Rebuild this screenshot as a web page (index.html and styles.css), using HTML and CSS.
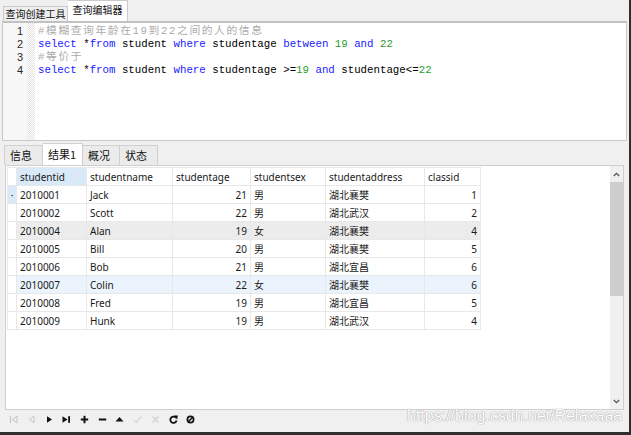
FILE: index.html
```html
<!DOCTYPE html>
<html>
<head>
<meta charset="utf-8">
<link rel="stylesheet" href="styles.css">
</head>
<body>
<div class="app">
  <div class="top-tabs">
    <div class="ttab">查询创建工具</div>
    <div class="ttab active">查询编辑器</div>
  </div>
  <div class="editor">
    <div class="gutter"><div>1</div><div>2</div><div>3</div><div>4</div></div>
    <div class="fold"></div>
    <div class="code">
      <div class="ln cm">#模糊查询年龄在19到22之间的人的信息</div>
      <div class="ln"><span class="kw">select</span> *<span class="kw">from</span> student <span class="kw">where</span> studentage <span class="kw">between</span> <span class="num">19</span> <span class="kw">and</span> <span class="num">22</span></div>
      <div class="ln cm">#等价于</div>
      <div class="ln"><span class="kw">select</span> *<span class="kw">from</span> student <span class="kw">where</span> studentage &gt;=<span class="num">19</span> <span class="kw">and</span> studentage&lt;=<span class="num">22</span></div>
    </div>
  </div>
  <div class="result">
    <div class="rtabs">
      <div class="rtab w39">信息</div>
      <div class="rtab active w40">结果1</div>
      <div class="rtab w37">概况</div>
      <div class="rtab w38">状态</div>
    </div>
    <div class="grid-frame">
      <div class="grid">
        <table>
          <colgroup>
            <col class="c-ind"><col class="c-id"><col class="c-name"><col class="c-age"><col class="c-sex"><col class="c-addr"><col class="c-cls">
          </colgroup>
          <thead>
            <tr><th class="ind"></th><th class="sel">studentid</th><th>studentname</th><th>studentage</th><th>studentsex</th><th>studentaddress</th><th>classid</th></tr>
          </thead>
          <tbody>
            <tr><td class="ind cur">·</td><td>2010001</td><td>Jack</td><td class="r">21</td><td>男</td><td>湖北襄樊</td><td class="r">1</td></tr>
            <tr><td class="ind"></td><td>2010002</td><td>Scott</td><td class="r">22</td><td>男</td><td>湖北武汉</td><td class="r">2</td></tr>
            <tr class="gray"><td class="ind"></td><td>2010004</td><td>Alan</td><td class="r">19</td><td>女</td><td>湖北襄樊</td><td class="r">4</td></tr>
            <tr><td class="ind"></td><td>2010005</td><td>Bill</td><td class="r">20</td><td>男</td><td>湖北襄樊</td><td class="r">5</td></tr>
            <tr><td class="ind"></td><td>2010006</td><td>Bob</td><td class="r">21</td><td>男</td><td>湖北宜昌</td><td class="r">6</td></tr>
            <tr class="blue"><td class="ind"></td><td>2010007</td><td>Colin</td><td class="r">22</td><td>女</td><td>湖北襄樊</td><td class="r">6</td></tr>
            <tr><td class="ind"></td><td>2010008</td><td>Fred</td><td class="r">19</td><td>男</td><td>湖北宜昌</td><td class="r">5</td></tr>
            <tr><td class="ind"></td><td>2010009</td><td>Hunk</td><td class="r">19</td><td>男</td><td>湖北武汉</td><td class="r">4</td></tr>
          </tbody>
        </table>
      </div>
      <div class="vscroll">
        <div class="sb-btn top"><svg width="7" height="5" viewBox="0 0 7 5"><polyline points="0.8,4 3.5,1.3 6.2,4" fill="none" stroke="#555" stroke-width="1.3"/></svg></div>
        <div class="sb-thumb"></div>
        <div class="sb-track"></div>
        <div class="sb-btn bottom"><svg width="7" height="5" viewBox="0 0 7 5"><polyline points="0.8,1 3.5,3.7 6.2,1" fill="none" stroke="#555" stroke-width="1.3"/></svg></div>
      </div>
    </div>
    <div class="toolbar">
      <div class="tb"><svg width="9" height="9" viewBox="0 0 9 9"><line x1="1.5" y1="1" x2="1.5" y2="8" stroke="#c4c4c4" stroke-width="1"/><polygon points="8,1.2 3.2,4.5 8,7.8" fill="none" stroke="#c4c4c4" stroke-width="1"/></svg></div>
      <div class="tb"><svg width="9" height="9" viewBox="0 0 9 9"><polygon points="7,1.2 2.2,4.5 7,7.8" fill="none" stroke="#c8c8c8" stroke-width="1"/></svg></div>
      <div class="tb"><svg width="9" height="9" viewBox="0 0 9 9"><polygon points="2,1.2 7,4.5 2,7.8" fill="#111"/></svg></div>
      <div class="tb"><svg width="9" height="9" viewBox="0 0 9 9"><polygon points="0.5,1.2 5.5,4.5 0.5,7.8" fill="#111"/><rect x="6.2" y="1.2" width="1.8" height="6.6" fill="#111"/></svg></div>
      <div class="tb"><svg width="9" height="9" viewBox="0 0 9 9"><rect x="0.8" y="3.5" width="7.4" height="2" fill="#111"/><rect x="3.5" y="0.8" width="2" height="7.4" fill="#111"/></svg></div>
      <div class="tb"><svg width="9" height="9" viewBox="0 0 9 9"><rect x="0.8" y="3.5" width="7.4" height="2" fill="#111"/></svg></div>
      <div class="tb"><svg width="9" height="9" viewBox="0 0 9 9"><polygon points="0.5,6.5 4.5,2 8.5,6.5" fill="#111"/></svg></div>
      <div class="tb"><svg width="9" height="9" viewBox="0 0 9 9"><polyline points="1,5 3.3,7.5 8.2,1.5" fill="none" stroke="#cfcfcf" stroke-width="1.1"/></svg></div>
      <div class="tb"><svg width="9" height="9" viewBox="0 0 9 9"><line x1="1.5" y1="1.5" x2="7.5" y2="7.5" stroke="#cfcfcf" stroke-width="1.1"/><line x1="7.5" y1="1.5" x2="1.5" y2="7.5" stroke="#cfcfcf" stroke-width="1.1"/></svg></div>
      <div class="tb"><svg width="9" height="9" viewBox="0 0 9 9"><path d="M7.2,3 A3.2,3.2 0 1 0 7.6,5.6" fill="none" stroke="#111" stroke-width="1.8"/><polygon points="4.8,0.4 8.8,0.6 8.2,4.6" fill="#111"/></svg></div>
      <div class="tb"><svg width="9" height="9" viewBox="0 0 9 9"><circle cx="4.5" cy="4.5" r="3.1" fill="none" stroke="#111" stroke-width="1.7"/><line x1="2.3" y1="6.7" x2="6.7" y2="2.3" stroke="#111" stroke-width="1.6"/></svg></div>
    </div>
  </div>
  <div class="watermark">https://blog.csdn.net/Relaxaaa</div>
</div>
</body>
</html>
```

FILE: styles.css
```css
* { box-sizing: border-box; }
html, body { margin: 0; padding: 0; }
body {
  width: 631px;
  height: 435px;
  overflow: hidden;
  background: #f0f0f0;
  font-family: "Noto Sans", "Noto Sans CJK SC", sans-serif;
}
.app {
  position: relative;
  width: 631px;
  height: 435px;
  border-right: 2px solid #2f2f2f;
  border-bottom: 3px solid #2f2f2f;
  background: #f0f0f0;
  display: flex;
  flex-direction: column;
}

/* top tabs */
.top-tabs {
  height: 21px;
  flex: none;
  display: flex;
  align-items: flex-end;
  padding-left: 3px;
}
.ttab {
  width: 65px;
  height: 15px;
  border: 1px solid #cacaca;
  border-bottom: none;
  background: #efefef;
  font-family: "Noto Sans CJK SC", sans-serif;
  font-size: 10px;
  line-height: 13px;
  text-align: center;
  color: #111;
}
.ttab.active {
  width: 60px;
  height: 21px;
  line-height: 18px;
  background: #fff;
  border-left: none;
}

/* editor */
.editor {
  height: 120px;
  flex: none;
  margin: 0 2px;
  border: 1px solid #c9c9c9;
  border-top: 2px solid #c2c2c2;
  background: #fff;
  display: flex;
}
.gutter {
  width: 24px;
  background: #f7f7f7;
  text-align: right;
  padding: 2px 4px 0 0;
  font-family: "Liberation Sans", sans-serif;
  font-size: 11px;
  line-height: 13px;
  color: #2a2a2a;
}
.fold {
  width: 8px;
  background: repeating-conic-gradient(#e2e2e2 0 25%, #ffffff 0 50%) 0 0 / 2px 2px;
}
.code {
  padding: 2px 0 0 3px;
  font-family: "Liberation Mono", "Noto Sans CJK SC", monospace;
  font-size: 10.75px;
  line-height: 13px;
  color: #000;
}
.ln { height: 13px; white-space: pre; }
.cm { color: #ababab; letter-spacing: 1.6px; }
.kw { color: #1a1aff; }
.num { color: #2e9b2e; }

/* results */
.result {
  flex: 1;
  display: flex;
  flex-direction: column;
}
.rtabs {
  height: 24px;
  flex: none;
  display: flex;
  align-items: flex-end;
  padding-left: 4px;
}
.rtab {
  height: 20px;
  border: 1px solid #d0d0d0;
  border-bottom: none;
  background: #ebebeb;
  font-family: "Noto Sans CJK SC", sans-serif;
  font-size: 11px;
  line-height: 18px;
  padding-left: 5px;
  color: #111;
}
.rtab + .rtab { border-left: none; }
.rtab.active { height: 22px; background: #fff; line-height: 21px; }
.w39 { width: 39px; }
.w40 { width: 40px; }
.w37 { width: 37px; }
.w38 { width: 38px; }

.grid-frame {
  height: 245px;
  flex: none;
  margin: 0 5px;
  border: 1px solid #cfcfcf;
  background: #fff;
  display: flex;
}
.grid {
  flex: 1;
  padding: 1px 0 0 1px;
}
table {
  border-collapse: collapse;
  table-layout: fixed;
  width: 473px;
  font-size: 10px;
  color: #1a1a1a;
}
.c-ind { width: 9px; }
.c-id { width: 70px; }
.c-name { width: 86px; }
.c-age { width: 78px; }
.c-sex { width: 75px; }
.c-addr { width: 99px; }
.c-cls { width: 56px; }
tr { height: 18px; }
th, td {
  padding: 0 3px;
  border: 1px solid #e8e8e8;
  white-space: nowrap;
  overflow: hidden;
  font-weight: normal;
  text-align: left;
  line-height: 14px;
}
th.ind, td.ind { padding: 0; text-align: center; }
td.cur { background: #d9e9f8; }
th.sel { background: #d9e9f8; }
td.r { text-align: right; }
tr.gray td { background: #ececec; }
tr.blue td { background: #ebf4fd; }
tr.gray td.ind, tr.blue td.ind { background: #fff; }

.vscroll {
  width: 13px;
  flex: none;
  background: #f0f0f0;
  display: flex;
  flex-direction: column;
}
.sb-btn {
  height: 16px;
  display: flex;
  align-items: center;
  justify-content: center;
}
.sb-btn.bottom { height: 15px; }
.sb-thumb { height: 114px; background: #cdcdcd; }
.sb-track { flex: 1; }

.toolbar {
  height: 20px;
  flex: none;
  display: flex;
  align-items: center;
  padding: 0 0 1px 5px;
}
.tb {
  width: 17.7px;
  display: flex;
  justify-content: center;
}
.tb svg { display: block; }

.watermark {
  position: absolute;
  left: 407px;
  top: 408px;
  font-family: "Liberation Sans", sans-serif;
  font-size: 16px;
  line-height: 16px;
  color: #ffffff;
  text-shadow: 0 0 1px #9a9a9a, 0 0 1px #9a9a9a;
  white-space: nowrap;
}
```
